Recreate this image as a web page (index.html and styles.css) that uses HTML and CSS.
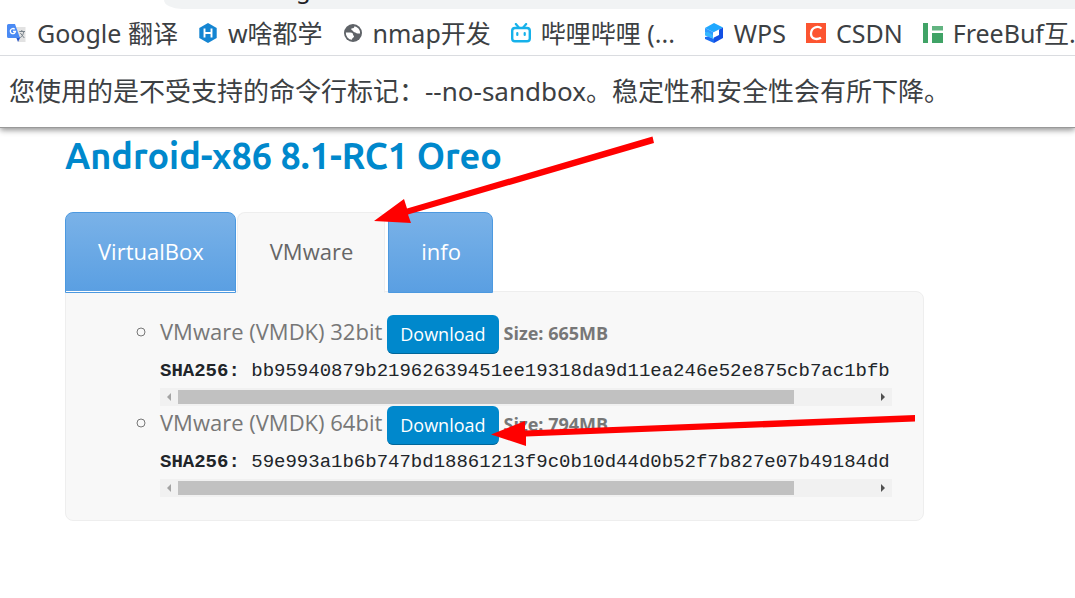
FILE: index.html
```html
<!DOCTYPE html>
<html lang="zh-CN">
<head>
<meta charset="utf-8">
<title>Android-x86 8.1-RC1 Oreo</title>
<link rel="stylesheet" href="styles.css">
</head>
<body>
<header class="chrome">
  <div class="toolbar"><div class="omnibox"><span class="url">g</span></div></div>
  <nav class="bookmarks">
    <a class="bookmark" href="#"><svg class="icon" viewBox="0 0 20 20"><path d="M9 4h9.500v15H11z" fill="#e2e2e2"/><path d="M9 14h4.500L11 19z" fill="#2956c6"/><path d="M1.500 1H8l5 14H1.500A1.500 1.500 0 0 1 0 13.500v-11A1.500 1.500 0 0 1 1.500 1z" fill="#4a8af4"/><path d="M7.700 6.200a2.600 2.600 0 1 0 .8 2.300H6" fill="none" stroke="#fff" stroke-width="1.300"/><path d="M12.300 8.500h5.700M14.800 7v1.500m2 0c-.5 3-1.500 5-3.500 6M13.300 10l4 5" fill="none" stroke="#78828a" stroke-width="1"/></svg>Google 翻译</a>
    <a class="bookmark" href="#"><svg class="icon" viewBox="0 0 20 20"><path d="M10 0l8.700 5v10L10 20l-8.700-5V5z" fill="#1485d2"/><path d="M6.500 5.500v9m7-9v9m-7-4.500h7" fill="none" stroke="#fff" stroke-width="1.900"/></svg>w啥都学</a>
    <a class="bookmark" href="#"><svg class="icon" viewBox="0 0 20 20"><circle cx="10" cy="10" r="9" fill="#5f6368"/><path d="M2.800 9.500h4.700c2 0 2.500 1 2.500 2s1 1.200 1 2c0 1.500-2 1-2 3.300a7 7 0 0 1-6.200-7.300zM11.500 3.200c-.3 1.800-1.200 2-2.500 2-1 0-1 1.800 0 2 1.500.2 1 2 2.500 2s1.500 1.300 3 1.300h2.600a7 7 0 0 0-5.600-7.300z" fill="#fff"/></svg>nmap开发</a>
    <a class="bookmark bookmark-wide" href="#"><svg class="icon" viewBox="0 0 20 20"><rect x="1.200" y="5" width="17.600" height="13.300" rx="2.800" fill="none" stroke="#16b1ea" stroke-width="2.400"/><path d="M4.800 1l3 3.500M15.200 1l-3 3.500M6.300 10v2m7.400-2v2" stroke="#16b1ea" stroke-width="2.200" stroke-linecap="round"/></svg>哔哩哔哩 (...</a>
    <a class="bookmark" href="#"><svg class="icon" viewBox="0 0 20 20"><path d="M10 0l9 4.500-9 5-9-4.500z" fill="#1fa8ff"/><path d="M1 5l9 4.500v4L1 9.500z" fill="#2f9bff"/><path d="M1 9.500L4 9l6 4v3l-9-3.500z" fill="#35b8ff"/><path d="M1 14l3-.5 6 2.500v4l-9-4z" fill="#1b6df2"/><path d="M10 9.500l9-5V15l-9 5z" fill="#124fe4"/><path d="M9 9.500l6-3V12l-6 3z" fill="#fff"/></svg>WPS</a>
    <a class="bookmark" href="#"><svg class="icon" viewBox="0 0 20 20"><path d="M0 0h20v20H0z" fill="#fc5531"/><path d="M15.500 5.500C12 2.500 5 4 5 10.800c0 5.500 6 6.200 10 4" fill="none" stroke="#fff" stroke-width="2.300"/></svg>CSDN</a>
    <a class="bookmark" href="#"><svg class="icon" viewBox="0 0 20 20"><path d="M0 0h5v20H0zM9 10h11v10H9z" fill="#40a366"/><path d="M9 3h11v4.500H9z" fill="#62b481"/></svg>FreeBuf互...</a>
  </nav>
  <div class="infobar">您使用的是不受支持的命令行标记：--no-sandbox。稳定性和安全性会有所下降。</div>
</header>
<main class="page">
  <h1 class="title">Android-x86 8.1-RC1 Oreo</h1>
  <div class="tabs" role="tablist">
    <button class="tab tab-first" role="tab">VirtualBox</button>
    <button class="tab tab-active" role="tab" aria-selected="true">VMware</button>
    <button class="tab" role="tab">info</button>
  </div>
  <section class="panel">
    <ul class="files">
      <li class="file">
        <div class="file-row"><span class="file-name">VMware (VMDK) 32bit</span> <button class="download">Download</button> <strong class="size">Size: 665MB</strong></div>
        <div class="hash"><b>SHA256:</b> bb95940879b21962639451ee19318da9d11ea246e52e875cb7ac1bfb</div>
        <div class="scrollbar"><svg class="arrow arrow-off" viewBox="0 0 18 18"><path d="M11 5v8L7 9z"/></svg><div class="track"><div class="thumb"></div></div><svg class="arrow" viewBox="0 0 18 18"><path d="M7 5v8l4-4z"/></svg></div>
      </li>
      <li class="file">
        <div class="file-row"><span class="file-name">VMware (VMDK) 64bit</span> <button class="download">Download</button> <strong class="size">Size: 794MB</strong></div>
        <div class="hash"><b>SHA256:</b> 59e993a1b6b747bd18861213f9c0b10d44d0b52f7b827e07b49184dd</div>
        <div class="scrollbar"><svg class="arrow arrow-off" viewBox="0 0 18 18"><path d="M11 5v8L7 9z"/></svg><div class="track"><div class="thumb"></div></div><svg class="arrow" viewBox="0 0 18 18"><path d="M7 5v8l4-4z"/></svg></div>
      </li>
    </ul>
  </section>
</main>
<svg class="annotations" width="1075" height="598" viewBox="0 0 1075 598" aria-hidden="true">
  <path d="M652.500 136.500l1.500 6.500L408 214.500l3 8.500-37-2 30-22 3 9.500z" fill="#f00"/>
  <path d="M915 415v6.500L526 436.500V446l-35-11.500L525 421v9.500z" fill="#f00"/>
</svg>
</body>
</html>
```
FILE: styles.css
```css
* { box-sizing: border-box; }
body {
  margin: 0;
  background: #fff;
  color: #777;
  font-family: "Open Sans", "Noto Sans CJK SC", sans-serif;
  overflow: hidden;
}
.chrome {
  position: relative;
  background: #fff;
  color: #3c4043;
  font-family: "Noto Sans", "Noto Sans CJK SC", sans-serif;
  border-bottom: 1px solid #999;
  box-shadow: 0 2px 6px rgba(0, 0, 0, .45);
}
.toolbar { height: 9px; padding-left: 164px; }
.omnibox {
  display: flex;
  align-items: flex-end;
  height: 9px;
  padding: 0 0 8px 132px;
  overflow: hidden;
  background: #f1f3f4;
  border-bottom-left-radius: 18px 9px;
}
.url { font-size: 24px; line-height: 24px; color: #202124; }
.bookmarks {
  display: flex;
  gap: 20px;
  height: 47px;
  padding: 2px 0 0 7px;
  overflow: hidden;
  border-bottom: 1px solid #dadce0;
}
.bookmark {
  display: flex;
  flex: none;
  align-items: center;
  gap: 10px;
  color: inherit;
  font-size: 25px;
  line-height: 44px;
  text-decoration: none;
  white-space: nowrap;
}
.bookmark-wide { min-width: 173px; }
.icon { width: 20px; height: 20px; }
.infobar {
  height: 71px;
  padding-left: 9px;
  font-size: 26px;
  line-height: 71px;
  white-space: nowrap;
}
.page { padding: 0 151px 0 65px; }
.title {
  margin: 0;
  padding: 4px 0 32px;
  color: #08c;
  font-family: Ubuntu, Lato, sans-serif;
  font-size: 36px;
  font-weight: 600;
  line-height: 48px;
  white-space: nowrap;
}
.tabs { position: relative; display: flex; align-items: flex-start; }
.tab {
  height: 81px;
  padding: 0 31px 4px 32px;
  border: 1px solid #4c99e0;
  border-radius: 8px 8px 0 0;
  background: linear-gradient(#7ab2e8, #5a9fe2);
  color: #fff;
  font-family: inherit;
  font-size: 22px;
  font-weight: 400;
}
.tab-first { box-shadow: inset 0 -1px 0 #fff; }
.tab-active {
  margin: 0 3px 0 1px;
  border-color: #eee;
  border-bottom-color: #f8f8f8;
  background: #f8f8f8;
  color: #666;
}
.panel {
  margin-top: -2px;
  padding: 23px 31px 23px 94px;
  border: 1px solid #eee;
  border-radius: 0 8px 8px 8px;
  background: #f8f8f8;
}
.files { margin: 0; padding: 0; list-style: circle; font-size: 22px; }
.file { height: 91px; }
.file-row { display: flex; align-items: center; gap: 5px; height: 39px; }
.file-name { padding-bottom: 8px; line-height: 30px; }
.download {
  height: 39px;
  padding: 0 13px 1px;
  border: 0;
  border-bottom: 1px solid #069;
  border-radius: 6px;
  background: #08c;
  color: #fff;
  font-family: inherit;
  font-size: 18px;
}
.size { padding-bottom: 4px; font-size: 18px; font-weight: 700; }
.hash {
  height: 34px;
  overflow: hidden;
  color: #212529;
  font-family: "Liberation Mono", monospace;
  font-size: 19px;
  line-height: 35px;
  white-space: nowrap;
}
.scrollbar { display: flex; height: 18px; background: #f1f1f1; }
.arrow { width: 18px; height: 18px; fill: #505050; }
.arrow-off { fill: #a3a3a3; }
.track { flex: 1; padding: 2px 0; }
.thumb { width: 88.5%; height: 14px; background: #c1c1c1; }
.annotations { position: absolute; top: 0; left: 0; pointer-events: none; }
```
